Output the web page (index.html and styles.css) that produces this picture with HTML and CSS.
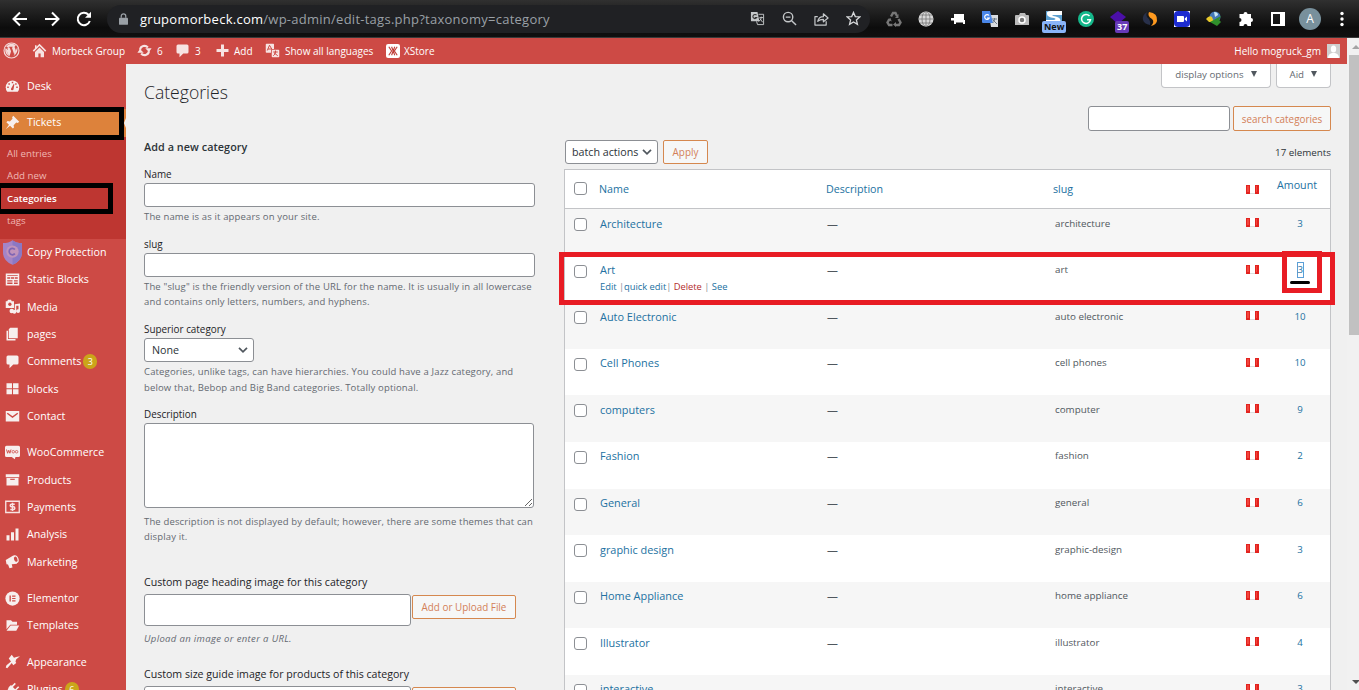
FILE: index.html
```html
<!DOCTYPE html>
<html lang="en">

<head>
    <meta charset="utf-8">
    <title>Categories - Morbeck Group</title>
    <link rel="stylesheet" href="styles.css">
</head>

<body>
    <svg class="sprite">
        <symbol id="comment" viewBox="0 0 20 20"><path d="M4 2h12q2 0 2 2v8q0 2-2 2h-5l-5 5v-5H4q-2 0-2-2V4q0-2 2-2z" /></symbol>
        <symbol id="flag" viewBox="0 0 13 9"><path fill="#fff" d="M0 0h13v9H0z" /><path fill="#e2231f" d="M0 0h4v9H0zM9 0h4v9H9z" /><path fill="#f2453d" d="M1 1h2v6H1zM10 1h1v6h-1z" /><path fill="#ddd" d="M4 8h5v1H4z" /></symbol>
        <symbol id="chevron" viewBox="0 0 10 6"><path fill="none" stroke="#50575e" stroke-width="1.7" d="M1 .8l4 4 4-4" /></symbol>
    </svg>

    <div class="browser">
        <div class="nav">
            <svg viewBox="0 0 16 16"><path d="M15 8H2M8 1.500L1.500 8 8 14.500" /></svg>
            <svg viewBox="0 0 16 16"><path d="M1 8h13M8 1.500L14.500 8 8 14.500" /></svg>
            <svg viewBox="0 0 16 16"><path d="M13.800 10A6.200 6.200 0 1 1 12.500 3.700L14 5.500" /><path class="solid" d="M15 .8v6H9z" /></svg>
        </div>
        <div class="address">
            <svg class="lock" viewBox="0 0 10 13"><path fill="#9aa0a6" d="M1 5h8q1 0 1 1v6q0 1-1 1H1q-1 0-1-1V6q0-1 1-1z" /><path fill="none" stroke="#9aa0a6" stroke-width="1.400" d="M2.500 5V3.200a2.500 2.500 0 0 1 5 0V5" /></svg>
            <span class="url"><b>grupomorbeck.com</b>/wp-admin/edit-tags.php?taxonomy=category</span>
            <div class="page-actions">
                <svg viewBox="0 0 16 16"><path fill="#c4c7c9" d="M1 1h7l2 10H2q-1 0-1-1z" /><path fill="none" stroke="#c4c7c9" d="M9 3.500h5.500v11H8l-1-3.500M10 7h4M12 6v1q0 3-3 4M10.500 8l3 4" /><path fill="none" stroke="#333" stroke-width="1.200" d="M7 4.500A2.200 2.200 0 1 0 7.200 7H5" /></svg>
                <svg viewBox="0 0 16 16"><path fill="none" stroke="#c4c7c9" stroke-width="1.500" d="M10.300 10.300L15 15M4 6.500h5" /><circle cx="6.500" cy="6.500" r="5" fill="none" stroke="#c4c7c9" stroke-width="1.500" /></svg>
                <svg viewBox="0 0 16 16"><path fill="none" stroke="#c4c7c9" stroke-width="1.300" stroke-linejoin="round" d="M4 6H1v9h12v-4M4 11q1-5 6-5V3l5 4.500-5 4V9q-4 0-6 2z" /></svg>
                <svg viewBox="0 0 16 16"><path fill="none" stroke="#d4d6d8" stroke-width="1.400" d="M8 1.500l1.900 4.400 4.800.4-3.600 3.200 1.100 4.700L8 11.700l-4.200 2.500 1.100-4.700L1.300 6.300l4.800-.4z" /></svg>
            </div>
        </div>
        <div class="extensions">
            <span><svg viewBox="0 0 16 16"><path fill="none" stroke="#777" stroke-width="2.400" d="M5 5.500L7 2h2.500L11 5M12.500 8l2 3.500-1.500 2.500H9.500M6.500 14H3l-1.500-2.500 2-3.500" /><path fill="#777" d="M12.500 3v4H9zM10 11v5l-3-2.500zM1.500 8.500L4.500 7l1.200 3.500z" /></svg></span>
            <span><svg viewBox="0 0 16 16"><circle cx="8" cy="8" r="7.500" fill="#d8d8d8" /><path fill="none" stroke="#777" stroke-width=".8" d="M8 0v16M.5 8h15M2 4h12M2 12h12" /><ellipse cx="8" cy="8" rx="4" ry="7.500" fill="none" stroke="#777" stroke-width=".8" /></svg></span>
            <span><svg viewBox="0 0 16 16"><path fill="#fff" d="M4 3h10v6h1v4h-2v-1.500H6V13H4V9.500H1V7h3z" /></svg></span>
            <span><svg viewBox="0 0 16 16"><path fill="#d9dce0" d="M7 4h9v12H9z" /><path fill="#4a86e8" d="M0 0h8l3 12H1q-1 0-1-1z" /><path fill="none" stroke="#fff" stroke-width="1.200" d="M7 4.500A2.400 2.400 0 1 0 7.300 7H5" /><path fill="none" stroke="#6b7885" d="M10 8h5M12.500 7v1q0 3-2 4M11 9l4 4" /></svg></span>
            <span><svg viewBox="0 0 16 16"><path fill="#bbb" d="M2 4h3l1-2h5l1 2h2q1 0 1 1v9H1V5q0-1 1-1z" /><circle cx="8" cy="9" r="3" fill="#777" stroke="#fff" stroke-width="1.500" /></svg></span>
            <span><svg viewBox="0 0 16 16"><path fill="#5b9fd0" d="M0 0h16v13H0z" /><path fill="#fff" d="M16 0H5Q0 0 1 3q0 3 7 4 3 1 0 2H0v3h11q5-1 3-4-1-2-7-3-2-1 1-1h8z" /></svg><i class="tag new">New</i></span>
            <span><svg viewBox="0 0 16 16"><circle cx="8" cy="8" r="8" fill="#15b88b" /><path fill="none" stroke="#fff" stroke-width="1.500" d="M11.500 5A4.500 4.500 0 1 0 12.500 8.700H9" /></svg></span>
            <span><svg viewBox="0 0 16 16"><path fill="#4b0fa8" d="M8 0l8 6-8 7-8-7z" /></svg><i class="tag count">37</i></span>
            <span><svg viewBox="0 0 16 16"><path fill="#ff9a1f" d="M7 1q9 1 8 9-1 4-6 5 4-4 1-7-5-3-3-7z" /><path fill="#28304a" d="M5 1Q0 4 1 9q1 4 7 5 1-3-1-6-4-3-2-7z" /></svg></span>
            <span><svg viewBox="0 0 16 16"><path fill="#fff" d="M0 0h16v16H0z" /><rect width="16" height="16" rx="4" fill="#1c2bd0" /><path fill="#fff" d="M3 5h6q1 0 1 1v4q0 1-1 1H3zM10.700 7.500L13 5.500v5l-2.300-2z" /></svg></span>
            <span><svg viewBox="0 0 16 16"><circle cx="9" cy="6" r="5.500" fill="#4478b8" /><path fill="#c9e7f4" d="M8 1q4 0 4 3L9 6z" /><path fill="#e8c92a" d="M0 8q3-4 6-2l2 5H3z" /><path fill="#2f8f2b" d="M4 11l11-6-2 4 2 2-4 4z" /></svg></span>
            <span><svg viewBox="0 0 16 16"><path fill="#fff" d="M2 3h3.500a2 2 0 1 1 4 0H13v4a2 2 0 1 1 0 4v4H9.500a2 2 0 1 0-4 0H1.500v-4a2 2 0 1 0 0-4V3z" /></svg></span>
            <span><svg viewBox="0 0 16 16"><path fill="none" stroke="#fff" stroke-width="2" d="M2 2h12v12H2z" /><path fill="#fff" d="M10 2h4v12h-4z" /></svg></span>
            <span class="profile">A</span>
            <span><svg viewBox="0 0 16 16"><g fill="#fff"><circle cx="8" cy="2.500" r="1.700" /><circle cx="8" cy="8" r="1.700" /><circle cx="8" cy="13.500" r="1.700" /></g></svg></span>
        </div>
    </div>

    <div class="window">
        <div class="site">
            <div class="adminbar">
                <svg class="wp" viewBox="0 0 20 20"><circle cx="10" cy="10" r="8.800" fill="none" stroke="#f5dcdb" stroke-width="1.300" /><path fill="#f5dcdb" d="M3 7l4.200 10.300L9.500 11 7.700 6.400H6.800v-.8h4.600v.8h-1l3 9 1.300-4.500c.8-2.500-1-3.500-1-5 0-1 .8-1.800 1.700-1.800A7.500 7.500 0 0 0 3.700 6H6v.5H5l3 9 1.200-3.500M17 6q.8 7-4.500 10.500L16 8zM3 7q-1.500 6 3.500 9.500z" /></svg>
                <a class="home"><svg viewBox="0 0 20 20"><path d="M10 1l9 9-1.500 1.500L10 4l-7.500 7.500L1 10l3-3V3h2v2zM10 6l6 6v7h-4.500v-5h-3v5H4v-7z" /></svg>Morbeck Group</a>
                <a class="updates"><svg viewBox="0 0 20 20"><path fill="none" stroke="#f7e3e2" stroke-width="2.800" d="M4 9a6 6 0 0 1 10.500-3M16 11a6 6 0 0 1-10.500 3" /><path d="M11 7h8.500L16 12zM9 13H.5L4 8z" /></svg>6</a>
                <a class="replies"><svg><use href="#comment" /></svg>3</a>
                <a class="add"><svg viewBox="0 0 20 20"><path d="M8 2h4v6h6v4h-6v6H8v-6H2V8h6z" /></svg>Add</a>
                <a class="langs"><svg viewBox="0 0 20 20"><path d="M2 1h9q1 0 1 1v6H9q-1 0-1 1v4H2q-1 0-1-1V2q0-1 1-1zM10 9h8q1 0 1 1v8q0 1-1 1h-8q-1 0-1-1v-8q0-1 1-1z" /><path fill="none" stroke="#cd4a45" stroke-width="1.300" d="M3 10l3-7 3 5M4 8h4M11 12h6M14 10v2q0 3-3 5M12 13l5 4" /></svg>Show all languages</a>
                <a class="xstore"><svg viewBox="0 0 20 20"><rect width="20" height="20" rx="3" fill="#fff" /><path fill="none" stroke="#bf3d38" stroke-width="1.600" d="M4 4l4 6-4 6M16 4l-4 6 4 6M8 4l4.500 12M12.500 4L8 16" /></svg>XStore</a>
                <div class="hello">Hello mogruck_gm <svg viewBox="0 0 13 14"><path fill="#cfcfcf" d="M0 0h13v14H0z" /><ellipse cx="6.500" cy="5" rx="2.700" ry="3.500" fill="#fff" /><path fill="#fff" d="M1 14q0-4 4-5h3q4 1 4 5z" /></svg></div>
            </div>

            <div class="layout">
                <div class="menu">
                    <a class="item"><svg viewBox="0 0 20 20"><path d="M10 2a9 9 0 0 1 9 9q0 4-2 6H3q-2-2-2-6a9 9 0 0 1 9-9z" /><path fill="#cd4a45" d="M9 3.500h2v2H9zM4.500 5.500h2v2h-2zM13.500 5.500h2v2h-2zM3 10h2v2H3zM15 10h2v2h-2zM11.500 6.500l1 .5-1 6q0 2-2 2t-1.500-2z" /></svg>Desk</a>
                    <a class="item current"><svg viewBox="0 0 20 20"><path d="M11 1l8 8-2 1.500-2-.5-3.500 3.500.5 3-1.500 1.500-3.800-3.800L1 19l4.300-6L1.800 9.500 3.500 8l3 .5L10 5l-.5-2z" /></svg>Tickets</a>
                    <div class="submenu">
                        <a>All entries</a>
                        <a>Add new</a>
                        <a class="active">Categories</a>
                        <a>tags</a>
                    </div>
                    <a class="item shield"><svg viewBox="0 0 20 26"><path fill="#a484c6" d="M10 0q4 3 10 3v10q0 9-10 13Q0 22 0 13V3q6 0 10-3z" /><path fill="#8b78c4" d="M10 0q4 3 10 3v10q0 9-10 13z" /><circle cx="10" cy="12" r="6.500" fill="#c193bb" /><path fill="none" stroke="#7f65b4" stroke-width="1.800" d="M12.500 9.800a3.400 3.400 0 1 0 0 4.400" /></svg>Copy Protection</a>
                    <a class="item"><svg viewBox="0 0 20 20"><path d="M1 2h18v16H1z" /><path fill="#cd4a45" d="M3 4h14v1H3zM3 7h4v2H3zM8 7h4v2H8zM13 7h4v2h-4zM3 11h7v1.500H3zM12 11h5v1.500h-5zM3 14h7v2H3zM12 14h5v2h-5z" /></svg>Static Blocks</a>
                    <a class="item"><svg viewBox="0 0 20 20"><path d="M1 3h2l1-2h4l1 2h3v9H1zM13 7l7-1v10a2.500 2.500 0 1 1-2-2.400V9h-3v8a2.500 2.500 0 1 1-2-2.400z" /><circle cx="6.500" cy="7" r="2.200" fill="#cd4a45" /><circle cx="9" cy="16" r="3" /></svg>Media</a>
                    <a class="item"><svg viewBox="0 0 20 20"><path d="M7 1h10v14H5V3zM2 5h2v11h10v2H2z" /></svg>pages</a>
                    <a class="item"><svg><use href="#comment" /></svg>Comments<i class="bubble">3</i></a>
                    <a class="item"><svg viewBox="0 0 20 20"><path d="M2 3h7.300v6.500H2zM10.700 3H18v6.500h-7.300zM2 11h7.300v6.500H2zM10.700 11H18v6.500h-7.300z" /></svg>blocks</a>
                    <a class="item"><svg viewBox="0 0 20 20"><path d="M1 4h18v14H1z" /><path fill="none" stroke="#cd4a45" stroke-width="2" d="M3 7l7 5 7-5" /></svg>Contact</a>
                    <hr>
                    <a class="item"><svg viewBox="0 0 20 20"><path d="M2 1h16q2 0 2 2v11q0 2-2 2h-4l-1 3-4-3H2q-2 0-2-2V3q0-2 2-2z" /><path fill="none" stroke="#cd4a45" stroke-width="1.200" d="M2 6l1.500 5L5 7l1.500 4L8 6" /><circle cx="11" cy="9" r="1.700" fill="none" stroke="#cd4a45" /><circle cx="15.500" cy="9" r="1.700" fill="none" stroke="#cd4a45" /></svg>WooCommerce</a>
                    <a class="item"><svg viewBox="0 0 20 20"><path d="M1 3h18v4H1zM2 8h16v10H2z" /><path fill="#cd4a45" d="M7 9h6v1.500H7z" /></svg>Products</a>
                    <a class="item"><svg viewBox="0 0 20 20"><path fill="none" stroke="#f7e3e2" stroke-width="1.800" d="M1 3h18v15H1z" /><path fill="none" stroke="#f7e3e2" stroke-width="2" d="M13 7H8.500q-1.500 0-1.500 1.700t1.500 1.700h3q1.500 0 1.500 1.800T11.500 14H7M10 5v11" /></svg>Payments</a>
                    <a class="item"><svg viewBox="0 0 20 20"><path d="M2 11h4v7H2zM8 7h4v11H8zM14 2h4v16h-4z" /></svg>Analysis</a>
                    <a class="item"><svg viewBox="0 0 20 20"><path d="M1 8l10-6 5 11-7 .5 1 4.500-4 1-2-5-2-.5z" /><ellipse cx="14" cy="7" rx="4" ry="5.500" transform="rotate(-20 14 7)" /><ellipse cx="14.300" cy="7" rx="2.200" ry="3.600" transform="rotate(-20 14 7)" fill="#cd4a45" /></svg>Marketing</a>
                    <hr>
                    <a class="item"><svg viewBox="0 0 20 20"><circle cx="10" cy="10" r="9.500" /><path fill="#cd4a45" d="M6 6h1.800v8H6zM9.500 6H14v1.600H9.500zM9.500 9.200H14v1.600H9.500zM9.500 12.400H14V14H9.500z" /></svg>Elementor</a>
                    <a class="item"><svg viewBox="0 0 20 20"><path d="M2 3h6l2 2h6v4H7l-5 6zM7.500 10H19l-4 7H2z" /></svg>Templates</a>
                    <hr>
                    <a class="item"><svg viewBox="0 0 20 20"><path d="M9 1l3 4 3-1 5-1-5 4-1 3 1 2-4 3-2-3-6 7-2-1 1-3 6-5-3-4z" /></svg>Appearance</a>
                    <a class="item"><svg viewBox="0 0 20 20"><path d="M13 1l1.500 1.500-4 4 3 3 4-4L19 7l-4 4 1 1q-4 6-9 4l-4 3-2-2 3-4Q2 8 8 4l1 1z" /></svg>Plugins<i class="bubble">6</i></a>
                </div>

                <div class="content">
                    <div class="head">
                        <h1>Categories</h1>
                        <div class="screen-links">
                            <span>display options <i></i></span>
                            <span>Aid <i></i></span>
                        </div>
                    </div>
                    <div class="search">
                        <input type="text">
                        <button>search categories</button>
                    </div>

                    <div class="columns">
                        <form class="new-category">
                            <h2>Add a new category</h2>
                            <div class="field">
                                <label>Name</label>
                                <input type="text">
                                <p>The name is as it appears on your site.</p>
                            </div>
                            <div class="field">
                                <label>slug</label>
                                <input type="text">
                                <p>The "slug" is the friendly version of the URL for the name. It is usually in all lowercase<br>and contains only letters, numbers, and hyphens.</p>
                            </div>
                            <div class="field parent">
                                <label>Superior category</label>
                                <div class="select">None<svg><use href="#chevron" /></svg></div>
                                <p>Categories, unlike tags, can have hierarchies. You could have a Jazz category, and<br>below that, Bebop and Big Band categories. Totally optional.</p>
                            </div>
                            <div class="field description">
                                <label>Description</label>
                                <textarea></textarea>
                                <p>The description is not displayed by default; however, there are some themes that can<br>display it.</p>
                            </div>
                            <div class="upload">
                                <label>Custom page heading image for this category</label>
                                <div class="upload-row">
                                    <input type="text">
                                    <button type="button">Add or Upload File</button>
                                </div>
                                <p>Upload an image or enter a URL.</p>
                            </div>
                            <div class="upload">
                                <label>Custom size guide image for products of this category</label>
                                <div class="upload-row">
                                    <input type="text">
                                    <button type="button"></button>
                                </div>
                            </div>
                        </form>

                        <div class="list">
                            <div class="actions">
                                <div class="select">batch actions<svg><use href="#chevron" /></svg></div>
                                <button>Apply</button>
                                <span class="total">17 elements</span>
                            </div>
                            <table>
                                <thead>
                                    <tr>
                                        <th class="check"><input type="checkbox"></th>
                                        <th class="name">Name</th>
                                        <th class="desc">Description</th>
                                        <th class="slug">slug</th>
                                        <th class="lang"><svg><use href="#flag" /></svg></th>
                                        <th class="amount">Amount</th>
                                    </tr>
                                </thead>
                                <tbody>
                                    <tr>
                                        <td><input type="checkbox"></td>
                                        <td class="name">Architecture</td>
                                        <td>—</td>
                                        <td class="slug">architecture</td>
                                        <td class="lang"><svg><use href="#flag" /></svg></td>
                                        <td class="amount">3</td>
                                    </tr>
                                    <tr class="marked">
                                        <td><input type="checkbox"></td>
                                        <td class="name">Art
                                            <div class="row-actions"><a>Edit</a> |<a>quick edit</a>| <a class="delete">Delete</a> | <a>See</a></div>
                                        </td>
                                        <td>—</td>
                                        <td class="slug">art</td>
                                        <td class="lang"><svg><use href="#flag" /></svg></td>
                                        <td class="amount"><span class="focus">3</span></td>
                                    </tr>
                                    <tr>
                                        <td><input type="checkbox"></td>
                                        <td class="name">Auto Electronic</td>
                                        <td>—</td>
                                        <td class="slug">auto electronic</td>
                                        <td class="lang"><svg><use href="#flag" /></svg></td>
                                        <td class="amount">10</td>
                                    </tr>
                                    <tr>
                                        <td><input type="checkbox"></td>
                                        <td class="name">Cell Phones</td>
                                        <td>—</td>
                                        <td class="slug">cell phones</td>
                                        <td class="lang"><svg><use href="#flag" /></svg></td>
                                        <td class="amount">10</td>
                                    </tr>
                                    <tr>
                                        <td><input type="checkbox"></td>
                                        <td class="name">computers</td>
                                        <td>—</td>
                                        <td class="slug">computer</td>
                                        <td class="lang"><svg><use href="#flag" /></svg></td>
                                        <td class="amount">9</td>
                                    </tr>
                                    <tr>
                                        <td><input type="checkbox"></td>
                                        <td class="name">Fashion</td>
                                        <td>—</td>
                                        <td class="slug">fashion</td>
                                        <td class="lang"><svg><use href="#flag" /></svg></td>
                                        <td class="amount">2</td>
                                    </tr>
                                    <tr>
                                        <td><input type="checkbox"></td>
                                        <td class="name">General</td>
                                        <td>—</td>
                                        <td class="slug">general</td>
                                        <td class="lang"><svg><use href="#flag" /></svg></td>
                                        <td class="amount">6</td>
                                    </tr>
                                    <tr>
                                        <td><input type="checkbox"></td>
                                        <td class="name">graphic design</td>
                                        <td>—</td>
                                        <td class="slug">graphic-design</td>
                                        <td class="lang"><svg><use href="#flag" /></svg></td>
                                        <td class="amount">3</td>
                                    </tr>
                                    <tr>
                                        <td><input type="checkbox"></td>
                                        <td class="name">Home Appliance</td>
                                        <td>—</td>
                                        <td class="slug">home appliance</td>
                                        <td class="lang"><svg><use href="#flag" /></svg></td>
                                        <td class="amount">6</td>
                                    </tr>
                                    <tr>
                                        <td><input type="checkbox"></td>
                                        <td class="name">Illustrator</td>
                                        <td>—</td>
                                        <td class="slug">illustrator</td>
                                        <td class="lang"><svg><use href="#flag" /></svg></td>
                                        <td class="amount">4</td>
                                    </tr>
                                    <tr>
                                        <td><input type="checkbox"></td>
                                        <td class="name">interactive</td>
                                        <td>—</td>
                                        <td class="slug">interactive</td>
                                        <td class="lang"><svg><use href="#flag" /></svg></td>
                                        <td class="amount">3</td>
                                    </tr>
                                </tbody>
                            </table>
                        </div>
                    </div>
                </div>
            </div>
        </div>
        <div class="scrollbar"><div class="arrow"></div><div class="thumb"></div><div class="arrow down"></div></div>
    </div>
</body>

</html>
```
FILE: styles.css
```css
*,
*::before,
*::after {
    box-sizing: border-box;
}

body {
    margin: 0;
    height: 690px;
    overflow: hidden;
    background-color: #f0f0f0;
    color: #2c3338;
    font-family: "Open Sans", "Noto Sans", sans-serif;
    font-size: 10px;
}

.sprite {
    display: none;
}

h1,
h2,
p {
    margin: 0;
}

i {
    font-style: normal;
}

svg {
    flex: none;
}

/* browser toolbar */
.browser {
    height: 38px;
    display: flex;
    align-items: center;
    background: linear-gradient(#303030, #1c1c1c 40%, #0c0c0c 75%, #101010);
    border-bottom: 1px solid #3a3a3a;
}

.nav {
    display: flex;
    gap: 16px;
    padding-left: 12px;
    width: 107px;
}

.nav svg {
    width: 16px;
    height: 16px;
    fill: none;
    stroke: #fff;
    stroke-width: 2;
}

.nav .solid {
    fill: #fff;
    stroke: none;
}

.address {
    width: 763px;
    height: 28px;
    border-radius: 14px;
    background-color: #202124;
    display: flex;
    align-items: center;
    padding-left: 12px;
}

.lock {
    width: 9px;
    height: 12px;
}

.url {
    margin-left: 12px;
    color: #9aa0a6;
    font-size: 13px;
    letter-spacing: 0.26px;
    white-space: nowrap;
}

.url b {
    color: #fff;
    font-weight: normal;
}

.page-actions {
    display: flex;
    gap: 17px;
    margin-left: auto;
    padding-right: 9px;
}

.page-actions svg {
    width: 15px;
    height: 15px;
}

.extensions {
    display: flex;
    align-items: center;
    margin-left: 8px;
}

.extensions span {
    position: relative;
    width: 32px;
    height: 16px;
    text-align: center;
}

.extensions svg {
    width: 16px;
    height: 16px;
}

.tag {
    position: absolute;
    left: 4px;
    top: 10px;
    height: 12px;
    padding: 0 2px;
    border-radius: 2px;
    font-size: 9px;
    font-weight: bold;
    line-height: 12px;
}

.new {
    background-color: #8ab4f8;
    color: #111;
}

.count {
    left: 13px;
    background-color: #673ab7;
    color: #fff;
}

.extensions .profile {
    width: 22px;
    height: 22px;
    margin: 0 5px;
    border-radius: 50%;
    background-color: #78909c;
    color: #fff;
    font-size: 12px;
    line-height: 22px;
}

.window {
    display: flex;
    height: 652px;
}

.site {
    width: 1347px;
}

.scrollbar {
    width: 12px;
    padding-left: 2px;
    background-color: #f1f1f1;
}

.arrow {
    width: 7px;
    height: 17px;
    margin-left: 3px;
    display: flex;
    align-items: center;
}

.arrow::before {
    content: "";
    border: 4px solid transparent;
    border-top: 0;
    border-bottom: 4px solid #a3a3a3;
}

.arrow.down {
    margin-top: 338px;
}

.arrow.down::before {
    border-top: 4px solid #505050;
    border-bottom: 0;
}

.thumb {
    height: 280px;
    background-color: #c1c1c1;
}

/* admin bar */
.adminbar {
    height: 26px;
    padding-bottom: 1px;
    display: flex;
    align-items: center;
    background-color: #cd4a45;
    color: #fff;
    white-space: nowrap;
}

.adminbar a {
    display: flex;
    align-items: center;
}

.adminbar svg {
    width: 15px;
    height: 15px;
    fill: #f7e3e2;
}

.adminbar .wp {
    width: 17px;
    height: 17px;
    margin-left: 3px;
}

.home {
    width: 105px;
    margin-left: 12px;
    gap: 5px;
}

.updates {
    width: 38px;
    gap: 5px;
}

.replies {
    width: 40px;
    gap: 5px;
}

.add {
    width: 50px;
    gap: 4px;
}

.langs {
    width: 121px;
    gap: 5px;
}

.xstore {
    gap: 4px;
}

.adminbar .xstore svg {
    width: 14px;
    height: 14px;
}

.hello {
    display: flex;
    align-items: center;
    gap: 6px;
    margin-left: auto;
    padding-right: 7px;
}

.adminbar .hello svg {
    width: 13px;
    height: 14px;
}

/* side menu */
.layout {
    display: flex;
    height: 626px;
    overflow: hidden;
}

.menu {
    width: 126px;
    padding-top: 9px;
    background-color: #cd4a45;
    color: #fff;
    font-size: 10.700px;
}

.item {
    position: relative;
    display: flex;
    align-items: center;
    height: 27.300px;
    padding-left: 5px;
    padding-bottom: 1px;
    gap: 7px;
    white-space: nowrap;
}

.item svg {
    width: 15px;
    height: 15px;
    fill: #f7efee;
}

.item:first-child {
    margin-bottom: 8.700px;
}

.current {
    height: 28px;
    background-color: #dd823b;
}

.current::before {
    content: "";
    position: absolute;
    left: -3px;
    top: -2px;
    width: 127px;
    height: 33px;
    border: 5px solid #000;
}

.current::after {
    content: "";
    position: absolute;
    right: 0;
    top: 9px;
    border: 5px solid transparent;
    border-left: 0;
    border-right: 2px solid #f0f0f1;
}

.submenu {
    height: 102px;
    padding-top: 6px;
    background-color: #be3631;
    color: #f0b6b3;
    font-size: 9.700px;
}

.submenu a {
    position: relative;
    display: block;
    height: 22.500px;
    padding-left: 7px;
    line-height: 22.500px;
}

.submenu .active {
    color: #fff;
    font-weight: 600;
}

.submenu .active::before {
    content: "";
    position: absolute;
    left: -4px;
    top: -5px;
    width: 117px;
    height: 31px;
    border: 5px solid #000;
}

.shield {
    padding-left: 3px;
    gap: 5px;
}

.shield svg {
    width: 19px;
    height: 25px;
}

.bubble {
    width: 14px;
    height: 15px;
    margin-left: -5px;
    border-radius: 8px;
    background-color: #cba51a;
    font-size: 9px;
    line-height: 15px;
    text-align: center;
}

.menu hr {
    height: 9.200px;
    margin: 0;
    border: 0;
}

/* page */
.content {
    width: 1221px;
    padding: 0 16px 0 18px;
}

.head {
    display: flex;
    justify-content: space-between;
    height: 42px;
}

.head h1 {
    padding-top: 16px;
    color: #1d2327;
    font-size: 17.600px;
    font-weight: 300;
    line-height: 24px;
}

.screen-links {
    display: flex;
    gap: 5px;
}

.screen-links span {
    display: flex;
    align-items: center;
    gap: 7px;
    height: 24px;
    padding: 0 13px 3px;
    border: 1px solid #c3c4c7;
    border-top: 0;
    border-radius: 0 0 4px 4px;
    background-color: #fff;
    color: #646970;
    font-size: 9.700px;
}

.screen-links i {
    border: 3px solid transparent;
    border-top: 6px solid #50575e;
    border-bottom: 0;
}

input,
textarea,
.select {
    border: 1px solid #8c8f94;
    border-radius: 3px;
    background-color: #fff;
    margin: 0;
}

button {
    padding: 0;
    border: 1px solid #d5884f;
    border-radius: 2px;
    background-color: #f6f7f7;
    color: #d38058;
    font-family: inherit;
    font-size: 9.900px;
    white-space: nowrap;
}

.search {
    display: flex;
    justify-content: flex-end;
    gap: 3px;
    height: 25px;
}

.search input {
    width: 142px;
}

.search button {
    width: 98px;
}

.columns {
    display: flex;
    justify-content: space-between;
}

.new-category {
    width: 391px;
    padding-top: 8px;
}

h2 {
    margin-bottom: 12px;
    font-size: 10.800px;
    font-weight: 600;
    line-height: 16px;
    letter-spacing: 0.060px;
}

.field {
    margin-bottom: 13px;
}

label {
    display: block;
    height: 16px;
    line-height: 14px;
    font-size: 9.900px;
    color: #1d2327;
}

.field input {
    display: block;
    width: 100%;
    height: 24px;
}

.select {
    display: flex;
    align-items: center;
    justify-content: space-between;
    height: 24px;
    padding: 0 5px 1px 7px;
    font-size: 10.700px;
}

.select svg {
    width: 10px;
    height: 6px;
}

.parent .select {
    width: 110px;
}

.new-category p {
    padding-top: 2px;
    color: #646970;
    font-size: 9.500px;
    line-height: 15px;
    letter-spacing: 0.150px;
    white-space: nowrap;
}

.parent {
    margin-bottom: 11px;
}

.new-category .parent p {
    line-height: 16px;
}

textarea {
    display: block;
    width: 390px;
    height: 85px;
}

.description {
    margin-bottom: 30px;
}

.new-category .description p {
    padding-top: 6px;
}

.upload {
    height: 92px;
}

.upload label {
    height: 20px;
    font-size: 10.600px;
    line-height: 16px;
}

.upload-row {
    display: flex;
    gap: 1px;
}

.upload input {
    width: 267px;
    height: 32px;
}

.upload button {
    width: 104px;
    height: 24px;
    margin-top: 1px;
}

.new-category .upload p {
    padding-top: 5px;
    font-style: italic;
    letter-spacing: 0.350px;
}

/* category list */
.list {
    width: 767px;
    padding-top: 9px;
}

.actions {
    display: flex;
    align-items: center;
    gap: 5px;
    padding-left: 1px;
    margin-bottom: 5px;
}

.actions .select {
    width: 93px;
    padding-left: 6px;
}

.actions button {
    width: 45px;
    height: 24px;
}

.total {
    margin-left: auto;
    font-size: 9.800px;
}

table {
    width: 767px;
    table-layout: fixed;
    border: 1px solid #c3c4c7;
    border-spacing: 0;
    background-color: #fff;
    color: #50575e;
}

th {
    height: 39px;
    padding: 0 0 1px 5px;
    border-bottom: 1px solid #c3c4c7;
    color: #2271a1;
    font-size: 10.700px;
    font-weight: normal;
    text-align: left;
}

th.check {
    width: 29px;
}

th.name,
th.desc {
    width: 227px;
}

th.slug {
    width: 192px;
}

th.lang {
    width: 30px;
    padding: 0 0 0 6px;
}

th.amount {
    padding: 0 6px 9px 0;
}

td {
    height: 46.600px;
    padding: 6.500px 0 0 6px;
    vertical-align: top;
    font-size: 10.900px;
    line-height: 16px;
}

tbody tr:nth-child(odd) {
    background-color: #f6f6f6;
}

td.name {
    color: #2271a1;
    font-weight: 500;
}

td.slug {
    padding-left: 7px;
    font-size: 9.800px;
}

input[type=checkbox] {
    appearance: none;
    display: block;
    width: 13px;
    height: 13px;
    margin-left: 4px;
}

td input[type=checkbox] {
    margin-left: 3px;
    margin-top: 2.500px;
}

.lang svg {
    display: block;
    width: 13px;
    height: 9px;
}

td.lang svg {
    margin-top: 2.500px;
}

.amount {
    text-align: center;
}

td.amount {
    padding-left: 0;
    color: #2271a1;
    font-size: 9.700px;
}

.row-actions {
    color: #8c8f94;
    font-size: 9.400px;
    font-weight: normal;
    line-height: 18px;
    letter-spacing: -0.030px;
    white-space: nowrap;
}

.row-actions a {
    color: #2271a1;
}

.row-actions .delete {
    color: #b32d2e;
}

.marked {
    position: relative;
}

.marked td:first-child::after {
    content: "";
    position: absolute;
    left: -6px;
    top: -4px;
    width: 776px;
    height: 53px;
    border: 5px solid #e81c24;
}

/* red box and underline round the amount */
.focus {
    position: relative;
    display: inline-block;
    width: 7px;
    height: 16px;
    border: 1px solid #5b9fd6;
    line-height: 14px;
}

.focus::before {
    content: "";
    position: absolute;
    left: -16px;
    top: -12px;
    width: 40px;
    height: 42px;
    border: 5px solid #e81c24;
}

.focus::after {
    content: "";
    position: absolute;
    left: -8px;
    top: 18px;
    width: 20px;
    height: 3px;
    border-radius: 2px;
    background-color: #000;
}
```
